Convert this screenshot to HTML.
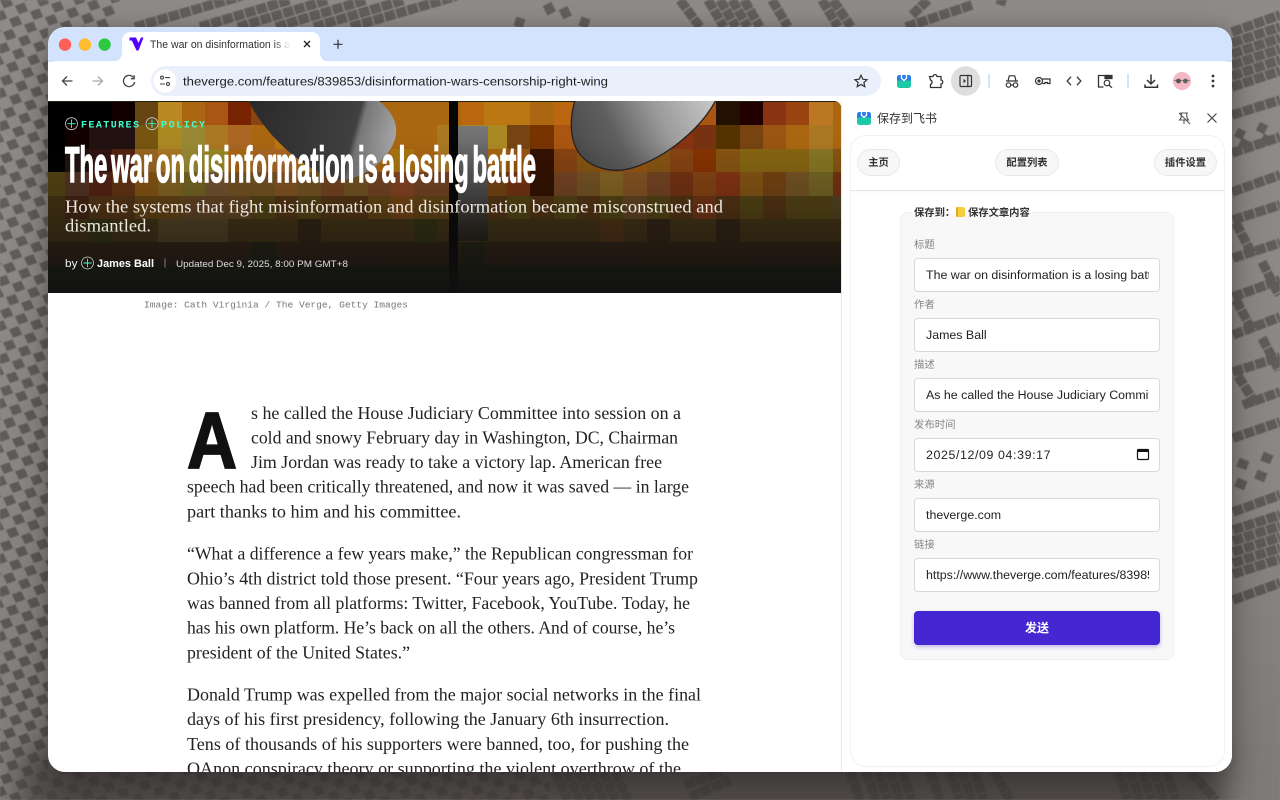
<!DOCTYPE html>
<html lang="zh"><head><meta charset="utf-8"><title>The war on disinformation is a losing battle</title>
<style>
*{box-sizing:border-box}
html,body{margin:0;padding:0;width:1280px;height:800px;overflow:hidden;background:#8c8886;font-family:"Liberation Sans","Noto Sans CJK SC",sans-serif}
svg{position:absolute;left:0;top:0}
#win{position:absolute;left:48px;top:27px;width:1184px;height:745px;border-radius:17px;background:#fff;overflow:hidden;box-shadow:0 14px 40px rgba(0,0,0,.3),0 0 14px rgba(0,0,0,.15)}
#strip{position:absolute;left:0;top:0;width:100%;height:35px;background:#d3e3fd}
#bar{position:absolute;left:0;top:34px;width:100%;height:40px;background:#fff;border-radius:9px 9px 0 0}
#hero{position:absolute;left:0;top:74px;width:793px;height:192px;overflow:hidden;border-top-right-radius:7px;background:#221}
#cells{position:absolute;left:-6px;top:1px;display:grid;grid-template-columns:repeat(35,23.25px);grid-auto-rows:23.4px}
#cells i{display:block}
#side{position:absolute;left:793px;top:74px;width:391px;height:671px;background:#fff;border-left:1px solid #e9e9e9}
.abs{position:absolute}
.pill{position:absolute;top:149px;height:27px;border-radius:14px;background:#f7f7f7;border:1px solid #e9e9e9;font-size:10.3px;font-weight:700;color:#333;text-align:center;line-height:27px}
.lab{position:absolute;left:914px;font-size:10.4px;color:#858585;line-height:14px}
.inp{position:absolute;left:914px;width:246px;height:34px;background:#fff;border:1px solid #d9d9d9;border-radius:4px;font-size:12.4px;color:#222;line-height:32px;padding:0 10px 0 11px;overflow:hidden;white-space:nowrap}
.inp span{display:block;width:223px;overflow:hidden}
</style></head><body>
<svg width="1280" height="800" viewBox="0 0 1280 800" style="filter:blur(.5px)">
<defs>
<pattern id="chk" patternUnits="userSpaceOnUse" width="2" height="2" patternTransform="matrix(10.5 -3.7 4.5 9.5 0 0)">
<rect width=".88" height=".88" fill="#625e5c"/><rect x="1" y="1" width=".88" height=".88" fill="#625e5c"/></pattern>
<linearGradient id="dk" x1="0" y1="0" x2="0" y2="1"><stop offset="0" stop-color="#000" stop-opacity="0"/><stop offset=".6" stop-color="#000" stop-opacity=".03"/><stop offset="1" stop-color="#000" stop-opacity=".12"/></linearGradient>
<filter id="bl" x="-10%" y="-100%" width="120%" height="300%"><feGaussianBlur stdDeviation="14"/></filter>
</defs>
<rect width="1280" height="800" fill="#8f8b89"/>
<path d="M0 0H122L112 27H48V772H550V800H0Z" fill="url(#chk)"/>
<g fill="none" stroke="#625e5c" stroke-width="9.500" stroke-dasharray="10.500 1.300">
<path d="M135 27L245 -5M200 27L290 0M238 27L328 0M276 27L366 0M314 27L404 0M351 27L457 -4"/>
<path d="M547 4L552 14M563 8L568 18M518 27L521 18M583 27L586 18"/>
<path d="M680 0L700 27M708 0L724 27M720 0L736 27M732 0L748 27M744 0L760 27M772 0L788 27M822 0L838 27M833 0L851 27"/>
<path d="M906 27L972 5M912 15L928 0M1000 5L1003 -3"/>
<path d="M1232 32L1280 15M1232 43L1280 27M1232 54L1280 38M1232 65L1280 49M1232 76L1280 60M1232 87L1280 71M1232 115L1280 100M1232 153L1280 137M1232 192L1280 175"/>
<path d="M1233 220L1280 205M1233 258L1280 243M1233 297L1280 280M1233 335L1280 317M1233 372L1280 357M1243 405L1280 392M1233 438L1280 422M1233 512L1280 495M1233 530L1280 515M1233 541L1280 526M1233 552L1280 537M1233 563L1280 548M1233 574L1280 559M1233 600L1280 583"/>
<path d="M1236 223L1253 256M1262 262L1279 295M1236 300L1253 332M1262 338L1279 370M1238 376L1256 404"/>
<path d="M1236 132L1244 136M1258 126L1266 130M1240 142L1248 146M1262 138L1270 142M1238 462L1248 466M1262 456L1272 460M1236 482L1246 486M1256 474L1266 478"/>
<path d="M555 772L568 800M567 772L580 800M579 772L592 800M591 772L604 800M603 772L616 800M615 772L628 800M690 797L730 780M685 785L722 772M850 772L860 800M866 772L876 800M878 772L888 800M890 772L900 800M902 772L912 800M930 772L940 800M950 772L960 800M962 772L972 800M974 772L984 800M994 772L1010 800M1118 772L1128 800M1130 772L1140 800M1142 772L1152 800M1154 772L1164 800M1166 772L1176 800M1190 772L1216 800"/>
</g>
<rect width="1280" height="800" fill="url(#dk)"/>
<rect x="20" y="750" width="1205" height="80" fill="#474341" opacity=".78" filter="url(#bl)"/>
</svg>

<div id="win">
<div id="strip"></div>
<div id="bar"></div>
<div id="hero">
<div id="cells">
<i style="background:#000"></i><i style="background:#000"></i><i style="background:#000"></i><i style="background:#100"></i><i style="background:#641"></i><i style="background:#b82"></i><i style="background:#a61"></i><i style="background:#a51"></i><i style="background:#720"></i><i style="background:#841"></i><i style="background:#841"></i><i style="background:#741"></i><i style="background:#841"></i><i style="background:#841"></i><i style="background:#a61"></i><i style="background:#a61"></i><i style="background:#a61"></i><i style="background:#a61"></i><i style="background:#b61"></i><i style="background:#b71"></i><i style="background:#b71"></i><i style="background:#a61"></i><i style="background:#b61"></i><i style="background:#a61"></i><i style="background:#a61"></i><i style="background:#a61"></i><i style="background:#a61"></i><i style="background:#a61"></i><i style="background:#a51"></i><i style="background:#210"></i><i style="background:#200"></i><i style="background:#831"></i><i style="background:#941"></i><i style="background:#b72"></i><i style="background:#a61"></i>
<i style="background:#000"></i><i style="background:#100"></i><i style="background:#211"></i><i style="background:#211"></i><i style="background:#751"></i><i style="background:#a82"></i><i style="background:#983"></i><i style="background:#a72"></i><i style="background:#a62"></i><i style="background:#a61"></i><i style="background:#b71"></i><i style="background:#a71"></i><i style="background:#a71"></i><i style="background:#a61"></i><i style="background:#a71"></i><i style="background:#a61"></i><i style="background:#a61"></i><i style="background:#a72"></i><i style="background:#a82"></i><i style="background:#a82"></i><i style="background:#741"></i><i style="background:#730"></i><i style="background:#a51"></i><i style="background:#a61"></i><i style="background:#a51"></i><i style="background:#a51"></i><i style="background:#a51"></i><i style="background:#831"></i><i style="background:#731"></i><i style="background:#530"></i><i style="background:#741"></i><i style="background:#951"></i><i style="background:#a61"></i><i style="background:#a72"></i><i style="background:#a61"></i>
<i style="background:#000"></i><i style="background:#211"></i><i style="background:#311"></i><i style="background:#521"></i><i style="background:#962"></i><i style="background:#a72"></i><i style="background:#983"></i><i style="background:#982"></i><i style="background:#a61"></i><i style="background:#a62"></i><i style="background:#a62"></i><i style="background:#a71"></i><i style="background:#961"></i><i style="background:#a61"></i><i style="background:#a61"></i><i style="background:#a71"></i><i style="background:#a61"></i><i style="background:#a72"></i><i style="background:#a71"></i><i style="background:#a61"></i><i style="background:#951"></i><i style="background:#310"></i><i style="background:#841"></i><i style="background:#851"></i><i style="background:#951"></i><i style="background:#951"></i><i style="background:#851"></i><i style="background:#841"></i><i style="background:#830"></i><i style="background:#851"></i><i style="background:#861"></i><i style="background:#861"></i><i style="background:#861"></i><i style="background:#872"></i><i style="background:#851"></i>
<i style="background:#541"></i><i style="background:#532"></i><i style="background:#521"></i><i style="background:#631"></i><i style="background:#851"></i><i style="background:#862"></i><i style="background:#762"></i><i style="background:#753"></i><i style="background:#752"></i><i style="background:#752"></i><i style="background:#852"></i><i style="background:#752"></i><i style="background:#742"></i><i style="background:#752"></i><i style="background:#742"></i><i style="background:#842"></i><i style="background:#742"></i><i style="background:#742"></i><i style="background:#752"></i><i style="background:#741"></i><i style="background:#731"></i><i style="background:#310"></i><i style="background:#742"></i><i style="background:#752"></i><i style="background:#862"></i><i style="background:#852"></i><i style="background:#742"></i><i style="background:#731"></i><i style="background:#841"></i><i style="background:#831"></i><i style="background:#851"></i><i style="background:#741"></i><i style="background:#752"></i><i style="background:#762"></i><i style="background:#731"></i>
<i style="background:#431"></i><i style="background:#421"></i><i style="background:#531"></i><i style="background:#531"></i><i style="background:#641"></i><i style="background:#641"></i><i style="background:#642"></i><i style="background:#642"></i><i style="background:#642"></i><i style="background:#541"></i><i style="background:#531"></i><i style="background:#541"></i><i style="background:#531"></i><i style="background:#531"></i><i style="background:#641"></i><i style="background:#741"></i><i style="background:#641"></i><i style="background:#641"></i><i style="background:#541"></i><i style="background:#531"></i><i style="background:#541"></i><i style="background:#531"></i><i style="background:#541"></i><i style="background:#531"></i><i style="background:#541"></i><i style="background:#642"></i><i style="background:#541"></i><i style="background:#531"></i><i style="background:#731"></i><i style="background:#531"></i><i style="background:#541"></i><i style="background:#531"></i><i style="background:#541"></i><i style="background:#541"></i><i style="background:#542"></i>
<i style="background:#431"></i><i style="background:#431"></i><i style="background:#331"></i><i style="background:#431"></i><i style="background:#431"></i><i style="background:#542"></i><i style="background:#542"></i><i style="background:#542"></i><i style="background:#431"></i><i style="background:#431"></i><i style="background:#431"></i><i style="background:#321"></i><i style="background:#431"></i><i style="background:#431"></i><i style="background:#431"></i><i style="background:#431"></i><i style="background:#331"></i><i style="background:#431"></i><i style="background:#431"></i><i style="background:#431"></i><i style="background:#431"></i><i style="background:#431"></i><i style="background:#431"></i><i style="background:#431"></i><i style="background:#531"></i><i style="background:#431"></i><i style="background:#321"></i><i style="background:#431"></i><i style="background:#431"></i><i style="background:#321"></i><i style="background:#431"></i><i style="background:#431"></i><i style="background:#431"></i><i style="background:#431"></i><i style="background:#431"></i>
<i style="background:#321"></i><i style="background:#321"></i><i style="background:#321"></i><i style="background:#321"></i><i style="background:#321"></i><i style="background:#321"></i><i style="background:#321"></i><i style="background:#321"></i><i style="background:#321"></i><i style="background:#221"></i><i style="background:#321"></i><i style="background:#321"></i><i style="background:#321"></i><i style="background:#321"></i><i style="background:#321"></i><i style="background:#321"></i><i style="background:#321"></i><i style="background:#321"></i><i style="background:#221"></i><i style="background:#321"></i><i style="background:#321"></i><i style="background:#321"></i><i style="background:#321"></i><i style="background:#321"></i><i style="background:#321"></i><i style="background:#321"></i><i style="background:#321"></i><i style="background:#321"></i><i style="background:#321"></i><i style="background:#321"></i><i style="background:#321"></i><i style="background:#321"></i><i style="background:#321"></i><i style="background:#321"></i><i style="background:#321"></i>
</div>
<svg width="793" height="192" viewBox="48 101 793 192">
<defs>
<linearGradient id="p1" gradientUnits="userSpaceOnUse" x1="571" y1="170" x2="712" y2="101"><stop offset="0" stop-color="#444"/><stop offset=".35" stop-color="#5f5f5f"/><stop offset=".65" stop-color="#9a9a9a"/><stop offset="1" stop-color="#c6c6c6"/></linearGradient>
<linearGradient id="p2" gradientUnits="userSpaceOnUse" x1="250" y1="110" x2="396" y2="150"><stop offset="0" stop-color="#2a2a2a"/><stop offset=".7" stop-color="#404040"/><stop offset=".74" stop-color="#777"/><stop offset="1" stop-color="#aaa"/></linearGradient>
<linearGradient id="bar2" x1="0" y1="0" x2="0" y2="1"><stop offset="0" stop-color="#777"/><stop offset=".6" stop-color="#4a4a4a"/><stop offset="1" stop-color="#1a1a1a" stop-opacity=".7"/></linearGradient>
<linearGradient id="fade" x1="0" y1="0" x2="0" y2="1"><stop offset="0" stop-color="#111" stop-opacity="0"/><stop offset=".4" stop-color="#111" stop-opacity=".22"/><stop offset=".7" stop-color="#111" stop-opacity=".5"/><stop offset="1" stop-color="#111" stop-opacity=".97"/></linearGradient>
</defs>
<path d="M248 100C262 128 290 160 330 178C352 186 385 165 394 142C399 128 396 115 378 100Z" fill="url(#p2)"/>
<path d="M575 100C570 118 570 135 576 148C586 168 612 174 632 168C665 158 700 130 716 100Z" fill="url(#p1)" stroke="#222" stroke-width="1.300"/>
<rect x="449" y="100" width="9" height="193" fill="#050505"/>
<rect x="458" y="126" width="30" height="115" fill="url(#bar2)"/>
<rect x="48" y="140" width="793" height="153" fill="url(#fade)"/>
</svg>
</div>
<div id="side"></div>
</div>

<svg width="1280" height="800" viewBox="0 0 1280 800">
<circle cx="65" cy="44.600" r="6.200" fill="#fe5f57"/><circle cx="85" cy="44.600" r="6.200" fill="#febc2e"/><circle cx="104.600" cy="44.600" r="6.200" fill="#2cc840"/>
<path d="M112 62C119 62 122 58 122 52V41C122 36 125 32 131 32H311C317 32 320 36 320 41V52C320 58 323 62 330 62Z" fill="#fff"/>
<path d="M129.500 37.500H136L138.500 43L141 37.500H143.500L138.500 50.500H136.500L131.800 40.500H129.500Z" fill="#5200ff"/>
<defs><linearGradient id="tf" x1="0" y1="0" x2="1" y2="0"><stop offset=".88" stop-color="#303134"/><stop offset="1" stop-color="#303134" stop-opacity="0"/></linearGradient></defs>
<text x="150" y="48" font-size="10.800" fill="url(#tf)" textLength="140" lengthAdjust="spacingAndGlyphs">The war on disinformation is a</text>
<path d="M304 41L310 47M310 41L304 47" stroke="#222" stroke-width="1.300" fill="none"/>
<path d="M338 39.800V48.800M333.500 44.300H342.500" stroke="#333" stroke-width="1.200" fill="none"/>
<g fill="none" stroke-width="1.300">
<path d="M72.500 81H62.500M67 76.500L62.500 81L67 85.500" stroke="#444"/>
<path d="M92.500 81H102.500M98 76.500L102.500 81L98 85.500" stroke="#a9a9a9"/>
<path d="M133.500 77.500A5.600 5.600 0 1 0 134.600 82M134.200 75.300V78.700H130.800" stroke="#444"/>
</g>
<rect x="151" y="66" width="730" height="30" rx="15" fill="#e9f0fb"/>
<circle cx="165" cy="81" r="11.500" fill="#fff"/>
<g fill="none" stroke="#444" stroke-width="1.100"><circle cx="162" cy="77.600" r="1.500"/><path d="M165 77.600H170M160 84H165"/><circle cx="168" cy="84" r="1.500"/></g>
<text x="183" y="85.400" font-size="12.400" fill="#1f1f1f" textLength="425" lengthAdjust="spacingAndGlyphs">theverge.com/features/839853/disinformation-wars-censorship-right-wing</text>
<path d="M861 75.200L862.800 79.200L867 79.700L863.900 82.500L864.800 86.700L861 84.500L857.200 86.700L858.100 82.500L855 79.700L859.200 79.200Z" fill="none" stroke="#333" stroke-width="1.200"/>
<rect x="897" y="75" width="14" height="13" rx="2.500" fill="#1cc9a6"/><path d="M897 77.500A2.500 2.500 0 0 1 899.500 75H908.500A2.500 2.500 0 0 1 911 77.500V80.500H897Z" fill="#2b7de9"/><path d="M901.500 75V78.200L904 80.500L906.500 78.200V75" fill="none" stroke="#fff" stroke-width="1.300"/>
<rect x="857" y="112" width="14" height="13" rx="2.500" fill="#1cc9a6"/><path d="M857 114.500A2.500 2.500 0 0 1 859.500 112H868.500A2.500 2.500 0 0 1 871 114.500V117.500H857Z" fill="#2b7de9"/><path d="M861.500 112V115.200L864 117.500L866.500 115.200V112" fill="none" stroke="#fff" stroke-width="1.300"/>
<path d="M929.500 76.500H933C933 74 937 74 937 76.500H941V80C943.300 80 943.300 84 941 84V87.500H930.500V84.500C932.500 84 932.500 80.500 930.500 80Z" fill="none" stroke="#333" stroke-width="1.300"/>
<circle cx="965.700" cy="81" r="14.700" fill="#dedede"/>
<g fill="none" stroke="#333" stroke-width="1.200"><rect x="960" y="75.500" width="11.500" height="11" rx="1.200"/><path d="M967.800 75.500V86.500"/></g><path d="M963.500 78.800L966 81L963.500 83.200Z" fill="#333"/>
<rect x="988" y="74" width="2" height="14" rx="1" fill="#d3e3fd"/>
<g fill="none" stroke="#333" stroke-width="1.200">
<path d="M1006 81H1018M1008 81L1009.300 75.800H1014.700L1016 81"/><circle cx="1008.500" cy="85" r="2.200"/><circle cx="1015.500" cy="85" r="2.200"/><path d="M1010.700 85H1013.300"/>
<circle cx="1039" cy="81" r="3.500"/><circle cx="1039" cy="81" r="1" fill="#333"/><path d="M1042.500 79H1050V83.500H1047.500V82.500H1045V83.500H1042.500"/>
<path d="M1071 76.800L1067.200 81L1071 85.200M1077 76.800L1080.800 81L1077 85.200" stroke-width="1.300"/>
<path d="M1110 75.500H1098.500V87H1103.500" stroke-width="1.300"/><path d="M1105 75.500H1112V78.500H1105Z" fill="#333"/><circle cx="1107" cy="83" r="2.800"/><path d="M1109 85L1112 87.800"/>
</g>
<rect x="1127" y="74" width="2" height="14" rx="1" fill="#d3e3fd"/>
<g fill="none" stroke="#333" stroke-width="1.500"><path d="M1151 74.500V83.500M1147 80L1151 84L1155 80M1145 84.500V87.300H1157.500V84.500"/></g>
<circle cx="1182" cy="81" r="9" fill="#f3b7c6"/><circle cx="1178.500" cy="81" r="2.400" fill="#555"/><circle cx="1185.500" cy="81" r="2.400" fill="#666"/><path d="M1174 80.300H1190" stroke="#555" stroke-width=".6"/>
<circle cx="1213" cy="76" r="1.400" fill="#333"/><circle cx="1213" cy="81" r="1.400" fill="#333"/><circle cx="1213" cy="86" r="1.400" fill="#333"/>
<g fill="none" stroke="#cfcfcf" stroke-width=".8"><circle cx="71.500" cy="123.700" r="6"/><circle cx="152" cy="123.700" r="6"/></g>
<path d="M71.500 119.500V128M67.300 123.700H75.700M152 119.500V128M147.800 123.700H156.200" stroke="#3cffd0" stroke-width=".9" fill="none"/>
<text x="81" y="127.500" font-family="Liberation Mono,monospace" font-size="10" font-weight="700" fill="#3cffd0" textLength="58" lengthAdjust="spacing">FEATURES</text>
<text x="161" y="127.500" font-family="Liberation Mono,monospace" font-size="10" font-weight="700" fill="#3cffd0" textLength="44" lengthAdjust="spacing">POLICY</text>
<text x="65" y="182" font-size="50" font-weight="700" fill="#fff" stroke="#fff" stroke-width="1.500" word-spacing="-6" textLength="471" lengthAdjust="spacingAndGlyphs">The war on disinformation is a losing battle</text>
<g font-family="Liberation Serif,serif" font-size="17.600" fill="#ece8e0">
<text x="65" y="212.500" textLength="658" lengthAdjust="spacingAndGlyphs">How the systems that fight misinformation and disinformation became misconstrued and</text>
<text x="65" y="231.500" textLength="86" lengthAdjust="spacingAndGlyphs">dismantled.</text></g>
<text x="65" y="267" font-size="11" fill="#eee" textLength="12.500" lengthAdjust="spacingAndGlyphs">by</text>
<circle cx="87.500" cy="263" r="6" fill="none" stroke="#cfcfcf" stroke-width=".8"/><path d="M87.500 258.800V267.200M83.300 263H91.700" stroke="#3cffd0" stroke-width=".9"/>
<text x="97" y="267" font-size="11" font-weight="700" fill="#fff" textLength="57" lengthAdjust="spacingAndGlyphs">James Ball</text>
<path d="M165 258.500V267.500" stroke="#999" stroke-width=".8"/>
<text x="176" y="266.800" font-size="9.500" fill="#ddd" textLength="172" lengthAdjust="spacingAndGlyphs">Updated Dec 9, 2025, 8:00 PM GMT+8</text>
<text x="144" y="307.600" font-family="Liberation Mono,monospace" font-size="9.570" fill="#777" textLength="264" lengthAdjust="spacing">Image: Cath Virginia / The Verge, Getty Images</text>
<text x="187" y="468" font-size="80" font-weight="700" fill="#111" stroke="#111" stroke-width="1.800" textLength="50" lengthAdjust="spacingAndGlyphs">A</text>
<defs><clipPath id="art"><rect x="48" y="400" width="793" height="372"/></clipPath></defs>
<g font-family="Liberation Serif,serif" font-size="18" fill="#222" clip-path="url(#art)">
<text x="251" y="419.200" textLength="430" lengthAdjust="spacingAndGlyphs">s he called the House Judiciary Committee into session on a</text>
<text x="251" y="443.600" textLength="427" lengthAdjust="spacingAndGlyphs">cold and snowy February day in Washington, DC, Chairman</text>
<text x="251" y="468" textLength="411" lengthAdjust="spacingAndGlyphs">Jim Jordan was ready to take a victory lap. American free</text>
<text x="187" y="492.600" textLength="502" lengthAdjust="spacingAndGlyphs">speech had been critically threatened, and now it was saved — in large</text>
<text x="187" y="517.400" textLength="274" lengthAdjust="spacingAndGlyphs">part thanks to him and his committee.</text>
<text x="187" y="559.600" textLength="506" lengthAdjust="spacingAndGlyphs">“What a difference a few years make,” the Republican congressman for</text>
<text x="187" y="584.400" textLength="511" lengthAdjust="spacingAndGlyphs">Ohio’s 4th district told those present. “Four years ago, President Trump</text>
<text x="187" y="609" textLength="503" lengthAdjust="spacingAndGlyphs">was banned from all platforms: Twitter, Facebook, YouTube. Today, he</text>
<text x="187" y="633.600" textLength="488" lengthAdjust="spacingAndGlyphs">has his own platform. He’s back on all the others. And of course, he’s</text>
<text x="187" y="658.400" textLength="223" lengthAdjust="spacingAndGlyphs">president of the United States.”</text>
<text x="187" y="700.500" textLength="514" lengthAdjust="spacingAndGlyphs">Donald Trump was expelled from the major social networks in the final</text>
<text x="187" y="725" textLength="482" lengthAdjust="spacingAndGlyphs">days of his first presidency, following the January 6th insurrection.</text>
<text x="187" y="749.800" textLength="502" lengthAdjust="spacingAndGlyphs">Tens of thousands of his supporters were banned, too, for pushing the</text>
<text x="187" y="774.400" textLength="494" lengthAdjust="spacingAndGlyphs">QAnon conspiracy theory or supporting the violent overthrow of the</text>
</g>
<text x="877" y="122.500" font-size="12" fill="#333" font-family="Liberation Sans,Noto Sans CJK SC,sans-serif">保存到飞书</text>
<g fill="none" stroke="#555" stroke-width="1.100"><path d="M1180 113H1188M1181.500 113L1181 118L1179.500 120H1188.500L1187 118L1186.500 113M1184 120V124M1179 113L1190 124"/></g>
<path d="M1207.500 113.500L1216.500 122.500M1216.500 113.500L1207.500 122.500" stroke="#444" stroke-width="1.200"/>
</svg>

<div class="abs" style="left:850px;top:135px;width:375px;height:632px;border:1px solid #eef2fb;border-radius:16px"></div>
<div class="abs" style="left:850px;top:190px;width:375px;height:1px;background:#e6e6e6;box-shadow:0 1px 2px rgba(0,0,0,.05)"></div>
<div class="pill" style="left:857px;width:43px">主页</div>
<div class="pill" style="left:995px;width:64px">配置列表</div>
<div class="pill" style="left:1154px;width:63px">插件设置</div>

<div class="abs" style="left:900px;top:212px;width:274px;height:448px;background:#f8f8f8;border:1px solid #f0f0f0;border-radius:8px"></div>
<div class="abs" style="left:912px;top:205px;width:120px;height:8px;background:#fff"></div>
<div class="abs" style="left:914px;top:207px;font-size:10.300px;font-weight:700;color:#333;line-height:14px;white-space:nowrap">保存到：</div>
<div class="abs" style="left:956px;top:207px;width:9px;height:10px;background:#f5cf3a;border-radius:1px 2px 2px 1px;border-left:2px solid #e0a92a"></div>
<div class="abs" style="left:968px;top:207px;font-size:10.300px;font-weight:700;color:#333;line-height:14px;white-space:nowrap">保存文章内容</div>

<div class="lab" style="top:239px">标题</div>
<div class="inp" style="top:258px"><span>The war on disinformation is a losing battle</span></div>
<div class="lab" style="top:299px">作者</div>
<div class="inp" style="top:318px"><span>James Ball</span></div>
<div class="lab" style="top:359px">描述</div>
<div class="inp" style="top:378px"><span>As he called the House Judiciary Committee into session</span></div>
<div class="lab" style="top:419px">发布时间</div>
<div class="inp" style="top:438px"><span style="letter-spacing:.6px">2025/12/09&nbsp;04:39:17</span></div>
<div class="lab" style="top:479px">来源</div>
<div class="inp" style="top:498px"><span>theverge.com</span></div>
<div class="lab" style="top:539px">链接</div>
<div class="inp" style="top:558px"><span>https://www.theverge.com/features/839853/disinformation</span></div>
<svg width="1280" height="800" viewBox="0 0 1280 800" style="pointer-events:none">
<rect x="1137.500" y="449.500" width="11" height="10" rx="1" fill="none" stroke="#111" stroke-width="1.200"/><rect x="1137.500" y="449" width="11" height="3" fill="#111"/>
</svg>
<div class="abs" style="left:914px;top:611px;width:246px;height:34px;background:#4426d2;border-radius:4px;color:#fff;font-size:12px;font-weight:700;text-align:center;line-height:34px;box-shadow:0 2px 4px rgba(71,35,208,.3)">发送</div>
</body></html>
